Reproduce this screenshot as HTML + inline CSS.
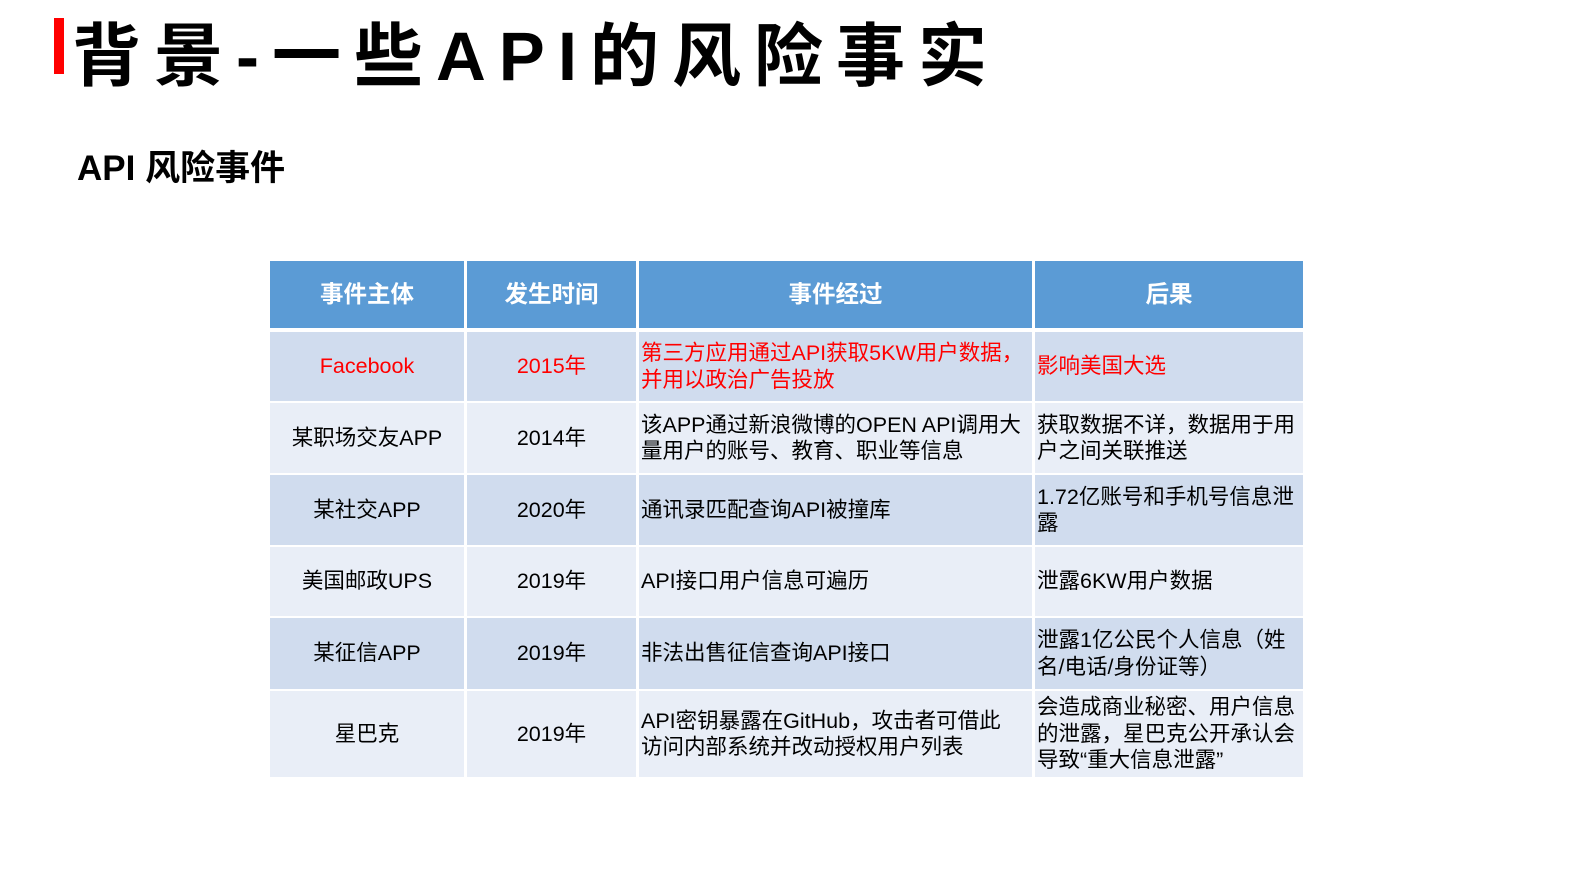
<!DOCTYPE html>
<html><head><meta charset="utf-8"><style>
body{margin:0;width:1587px;height:893px;background:#fff;position:relative;overflow:hidden;font-family:"Liberation Sans","Noto Sans CJK SC",sans-serif;}
.bar{position:absolute;left:54px;top:18px;width:10px;height:56px;background:#ff0000;}
.t{position:absolute;left:72px;top:12px;font-size:69px;font-weight:bold;letter-spacing:13px;line-height:90px;white-space:nowrap;color:#000;}
.s{position:absolute;left:77px;top:146px;font-size:35px;font-weight:bold;line-height:46px;white-space:nowrap;}
.c{position:absolute;display:flex;align-items:center;font-size:21.5px;line-height:26.5px;white-space:nowrap;box-sizing:border-box;padding-left:2px;overflow:hidden;}
.m{justify-content:center;padding:0}
.h{background:#5b9bd5;color:#fff;font-size:23.5px;font-weight:bold;justify-content:center;padding:0}
.o{background:#d0dcee}.e{background:#e9eef7}
.r{color:#ff0000}
</style></head><body>
<div class="bar"></div>
<div class="t">背景-一些API的风险事实</div>
<div class="s">API 风险事件</div>

<div class="c h" style="left:270px;top:261px;width:194px;height:67px">事件主体</div>
<div class="c h" style="left:467px;top:261px;width:169px;height:67px">发生时间</div>
<div class="c h" style="left:639px;top:261px;width:393px;height:67px">事件经过</div>
<div class="c h" style="left:1035px;top:261px;width:268px;height:67px">后果</div>

<div class="c o m r" style="left:270px;top:332px;width:194px;height:69px">Facebook</div>
<div class="c o m r" style="left:467px;top:332px;width:169px;height:69px">2015年</div>
<div class="c o r" style="left:639px;top:332px;width:393px;height:69px">第三方应用通过API获取5KW用户数据，<br>并用以政治广告投放</div>
<div class="c o r" style="left:1035px;top:332px;width:268px;height:69px">影响美国大选</div>

<div class="c e m" style="left:270px;top:403px;width:194px;height:70px">某职场交友APP</div>
<div class="c e m" style="left:467px;top:403px;width:169px;height:70px">2014年</div>
<div class="c e" style="left:639px;top:403px;width:393px;height:70px">该APP通过新浪微博的OPEN API调用大<br>量用户的账号、教育、职业等信息</div>
<div class="c e" style="left:1035px;top:403px;width:268px;height:70px">获取数据不详，数据用于用<br>户之间关联推送</div>

<div class="c o m" style="left:270px;top:475px;width:194px;height:70px">某社交APP</div>
<div class="c o m" style="left:467px;top:475px;width:169px;height:70px">2020年</div>
<div class="c o" style="left:639px;top:475px;width:393px;height:70px">通讯录匹配查询API被撞库</div>
<div class="c o" style="left:1035px;top:475px;width:268px;height:70px">1.72亿账号和手机号信息泄<br>露</div>

<div class="c e m" style="left:270px;top:547px;width:194px;height:69px">美国邮政UPS</div>
<div class="c e m" style="left:467px;top:547px;width:169px;height:69px">2019年</div>
<div class="c e" style="left:639px;top:547px;width:393px;height:69px">API接口用户信息可遍历</div>
<div class="c e" style="left:1035px;top:547px;width:268px;height:69px">泄露6KW用户数据</div>

<div class="c o m" style="left:270px;top:618px;width:194px;height:71px">某征信APP</div>
<div class="c o m" style="left:467px;top:618px;width:169px;height:71px">2019年</div>
<div class="c o" style="left:639px;top:618px;width:393px;height:71px">非法出售征信查询API接口</div>
<div class="c o" style="left:1035px;top:618px;width:268px;height:71px">泄露1亿公民个人信息（姓<br>名/电话/身份证等）</div>

<div class="c e m" style="left:270px;top:691px;width:194px;height:86px">星巴克</div>
<div class="c e m" style="left:467px;top:691px;width:169px;height:86px">2019年</div>
<div class="c e" style="left:639px;top:691px;width:393px;height:86px">API密钥暴露在GitHub，攻击者可借此<br>访问内部系统并改动授权用户列表</div>
<div class="c e" style="left:1035px;top:691px;width:268px;height:86px">会造成商业秘密、用户信息<br>的泄露，星巴克公开承认会<br>导致“重大信息泄露”</div>
</body></html>
